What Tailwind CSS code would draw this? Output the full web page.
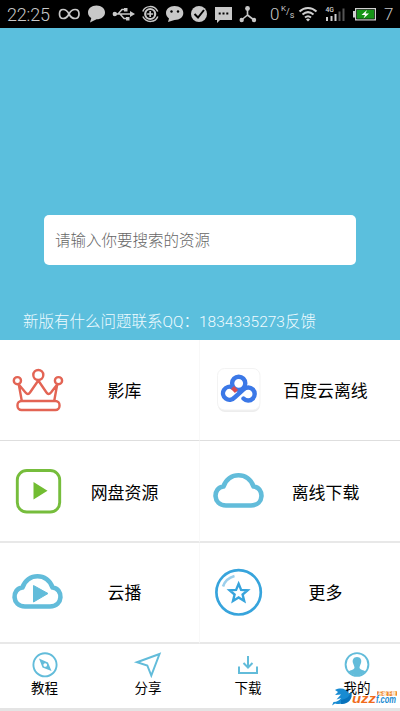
<!DOCTYPE html>
<html lang="zh-CN">
<head>
<meta charset="utf-8">
<title>云搜索</title>
<script src="https://cdn.jsdelivr.net/npm/@tailwindcss/browser@4"></script>
</head>
<body class="w-[400px] h-[711px] overflow-hidden bg-[#e4e4e4] font-[Roboto,'Noto_Sans_CJK_SC',sans-serif] text-black">
<div class="flex flex-col h-[711px] relative">
  <header class="h-7 bg-black flex items-center shrink-0 text-[#c8c8c8] font-light">
    <span class="w-[56px] pl-[7px] text-[18px] leading-7 tracking-[-0.2px] shrink-0 pt-[1px]">22:25</span>
    <svg class="w-[214px] h-7 shrink-0" viewBox="56 0 214 28" fill="none" stroke="#c8c8c8">
      <path stroke-width="1.7" d="M69 14C66 8 59.5 8 59.5 14S66 20 69 14S79 8 79 14S72 20 69 14Z"/>
      <path fill="#c8c8c8" stroke="none" d="M96.500 5.500C101.500 5.500 105 8.700 105 12.500S101.500 19.300 96.500 19.300L90 22.500 91.300 18C89 16.700 88 14.800 88 12.500 88 8.700 91.500 5.500 96.500 5.500Z"/>
      <g stroke-width="1.5"><path d="M114 14H132M118 14L122 9.500H125M120 14L124 18.500H127"/><path fill="#c8c8c8" stroke="none" d="M130 11L135 14L130 17ZM124 8h3.500v3.500H124ZM126 17h3.500v3.500H126Z"/><circle cx="114.800" cy="14" r="2.200" fill="#c8c8c8" stroke="none"/></g>
      <circle cx="150.200" cy="14" r="5" stroke-width="2.200"/><path d="M142.800 11.500C145 5.500 154 4.500 157.800 11.500M157.800 16.500C155.500 22.500 146.500 23.500 142.800 16.500" stroke-width="1.500"/><path stroke-width="1.700" d="M147.200 14H153.200M150.200 11V17"/>
      <path fill="#c8c8c8" stroke="none" d="M174.500 6C180 6 183.300 9 183.300 13S180 20 174.500 20L168 22 169 18.500C167 17 166 15 166 13 166 9 169.500 6 174.500 6Z"/>
      <g fill="#000" stroke="none"><circle cx="171.500" cy="11.500" r="1.200"/><circle cx="178" cy="11.500" r="1.200"/></g>
      <circle cx="199" cy="14" r="8" fill="#c8c8c8" stroke="none"/><path stroke="#000" stroke-width="2" d="M194.500 14L198 17.500L204 10"/>
      <path fill="#c8c8c8" stroke="none" d="M215 7H232V20H220L217 23V20H215Z"/><path stroke="#000" stroke-width="2" stroke-dasharray="2 1.800" d="M218.700 13.500H229"/>
      <path stroke-width="1.600" d="M247.500 9V15L241.500 20M247.500 15L254 20"/><g fill="#c8c8c8" stroke="none"><circle cx="247.500" cy="8.500" r="2.400"/><circle cx="241.700" cy="20" r="2.200"/><circle cx="254" cy="20" r="2.200"/></g>
    </svg>
    <span class="w-[10px] text-[17px] leading-7 shrink-0">0</span>
    <span class="w-[16px] shrink-0 flex text-[9px] leading-none pl-[1px] font-normal"><span class="-mt-[3px] text-[8px]">K</span><span>/</span><span class="mt-[3px]">s</span></span>
    <svg class="w-[88px] h-7 shrink-0" viewBox="296 0 88 28" fill="none" stroke="#d0d0d0">
      <g stroke-width="2"><path d="M299.500 11.500C304.500 6.800 311.500 6.800 316.500 11.500M302.500 14.500C306 11.500 310 11.500 313.500 14.500M305 17.500C307 15.800 309 15.800 311 17.500"/></g><path fill="#d0d0d0" stroke="none" d="M306 19.500Q308 17.500 310 19.500L308 21.500Z"/>
      <text x="325.500" y="11.500" fill="#d0d0d0" stroke="none" class="text-[8px] font-medium" textLength="8.500" lengthAdjust="spacingAndGlyphs">4G</text>
      <path stroke-width="2" d="M327 21V17M331.500 21V16M335.500 21V14"/><path stroke="#555" stroke-width="2" d="M339.500 21V11.500M343.500 21V8.500"/>
      <path fill="#d0d0d0" stroke="none" d="M353 11h2v-3h21v12.500h-21v-3h-2Z"/><path fill="#159416" stroke="#111" stroke-width=".7" d="M356.500 9.500H374.500V19H356.500Z"/><path fill="#fff" stroke="none" d="M367 10L361.500 15H365L363.500 18.500L369 13.500H365.500Z"/>
    </svg>
    <span class="text-[17px] leading-7">7</span>
  </header>

  <section class="h-[312px] bg-[#5bbfdd] shrink-0 flex flex-col">
    <div class="mt-[187px] mx-11 h-[50px] bg-white rounded-[5px] px-[11px] flex items-center text-[15.500px] font-light text-[#666] font-['Noto_Sans_CJK_SC',sans-serif]">请输入你要搜索的资源</div>
    <p class="mt-[45px] pl-[23px] text-[15.500px] leading-6 font-light text-[#f0fbff] whitespace-nowrap">新版有什么问题联系QQ：1834335273反馈</p>
  </section>

  <main class="grid grid-cols-2 grid-rows-[101px_102px_101px] shrink-0 text-[16.900px]">
    <div class="bg-white flex items-start border-r border-r-[#f8f8f8] border-b border-b-[#dedede]">
      <svg class="w-[76px] h-[100px] shrink-0" viewBox="0 340 76 100" fill="none" stroke="#e36454" stroke-width="2.400" stroke-linejoin="round">
        <circle cx="38.300" cy="375" r="5"/><circle cx="17.400" cy="380.700" r="3.600"/><circle cx="58.500" cy="380.700" r="3.600"/>
        <path d="M21.800 401L18.800 384.500L25.500 392.500Q28 395.500 30 392.500L38.300 380.500L46.500 392.500Q48.500 395.500 51 392.500L57.200 384.500L54.200 401"/><rect x="17.500" y="401" width="42" height="9" rx="4"/>
      </svg>
      <span class="w-[97px] text-center leading-[100px] pt-[1px] h-[100px]">影库</span>
    </div>
    <div class="bg-white flex items-start border-b border-b-[#dedede]">
      <svg class="w-[76px] h-[100px] shrink-0" viewBox="200 340 76 100" fill="none">
        <rect x="218" y="370" width="42" height="42" rx="7" fill="#ededed"/><rect x="217.500" y="368.500" width="42.500" height="41.500" rx="7" fill="#fff" stroke="#f3f3f3"/>
        <g stroke="#3b78e7" stroke-width="4.400"><circle cx="238.700" cy="383.300" r="6.600"/><path d="M232.500 387.500A6.500 6.500 0 1 0 234.500 397.500L243.500 389.500A6.500 6.500 0 1 1 243.500 398.500" stroke-linecap="round"/></g>
        <path stroke="#d84b50" stroke-width="4.500" d="M232.500 387.500L236.500 391.500"/>
      </svg>
      <span class="w-[99px] text-center whitespace-nowrap leading-[100px] pt-[1px] h-[100px]">百度云离线</span>
    </div>
    <div class="bg-white flex items-start border-r border-r-[#f8f8f8] border-b-2 border-b-[#e8e8e8]">
      <svg class="w-[76px] h-[100px] shrink-0" viewBox="0 441 76 100">
        <rect x="17.300" y="470.500" width="42.400" height="41.500" rx="9.500" fill="none" stroke="#76bd3c" stroke-width="2.900"/><path fill="#72bd32" d="M33.500 482L47.500 490.800L33.500 499.500Z"/>
      </svg>
      <span class="w-[97px] text-center leading-[100px] pt-[2px] h-[100px]">网盘资源</span>
    </div>
    <div class="bg-white flex items-start border-b-2 border-b-[#e8e8e8]">
      <svg class="w-[76px] h-[100px] shrink-0" viewBox="200 441 76 100" fill="none">
        <path stroke="#62bcda" stroke-width="4.600" stroke-linejoin="round" d="M226 505.500C212.500 505.500 212.500 487.500 223.500 486.500C228 471.500 249 471.500 253.500 486.500C264.500 487.500 264.500 505.500 251 505.500Z"/>
      </svg>
      <span class="w-[99px] text-center leading-[100px] pt-[2px] h-[100px]">离线下载</span>
    </div>
    <div class="bg-white flex items-start border-r border-r-[#f8f8f8] border-b-2 border-b-[#e8e8e8]">
      <svg class="w-[76px] h-[99px] shrink-0" viewBox="0 543 76 99" fill="none">
        <path stroke="#62bcda" stroke-width="4.600" stroke-linejoin="round" d="M25 606.500C11.500 606.500 11.500 588.500 22.500 587.500C27 572.500 48 572.500 52.500 587.500C63.500 588.500 63.500 606.500 50 606.500Z"/><path fill="#62bcda" stroke="#62bcda" stroke-linejoin="round" d="M33.500 585.500L48 593.500L33.500 602Z"/>
      </svg>
      <span class="w-[97px] text-center leading-[99px] pt-[1px] h-[99px]">云播</span>
    </div>
    <div class="bg-white flex items-start border-b-2 border-b-[#e8e8e8]">
      <svg class="w-[76px] h-[99px] shrink-0" viewBox="200 543 76 99" fill="none" stroke="#37a4dc">
        <circle cx="238.600" cy="592.300" r="22.200" stroke-width="2.700"/><path stroke="#9bcfec" stroke-width="2.600" d="M223 586.500C225 580.500 229 577.500 234.500 576"/>
        <path stroke-width="2.400" d="M238.600 583.800L241.100 589.900L247.600 590.300L242.600 594.500L244.200 601L238.600 597.500L233 601L234.600 594.500L229.600 590.300L236.100 589.900Z"/>
      </svg>
      <span class="w-[99px] text-center leading-[99px] pt-[1px] h-[99px]">更多</span>
    </div>
  </main>

  <nav class="h-[64px] bg-white shrink-0 flex items-start text-[13.500px] leading-5">
    <div class="w-[89px] pt-[6px] flex flex-col items-center">
      <svg class="w-[30px] h-[28px]" viewBox="29.500 650 30 28" fill="none"><circle cx="44.500" cy="664.800" r="11.600" stroke="#62bcda" stroke-width="1.900"/><path fill="#62bcda" fill-rule="evenodd" d="M38.500 658.500L47.500 662.500L51 671L42 667.500ZM44.700 663.200A1.800 1.800 0 1 0 44.710 663.200Z"/></svg>
      <span>教程</span>
    </div>
    <div class="w-[118px] pt-[6px] flex flex-col items-center">
      <svg class="w-[30px] h-[28px]" viewBox="133 650 30 28" fill="none"><path stroke="#62bcda" stroke-width="2" d="M159.500 654L137 662.200L147.300 665.500L151.300 675.500Z"/></svg>
      <span>分享</span>
    </div>
    <div class="w-[82px] pt-[6px] flex flex-col items-center">
      <svg class="w-[30px] h-[28px]" viewBox="233 650 30 28" fill="none" stroke="#62bcda" stroke-width="2"><path d="M239 666.500V673H257V666.500M248 656V667.500M243.500 663L248 667.500L252.500 663"/></svg>
      <span>下载</span>
    </div>
    <div class="flex-1 pt-[6px] flex flex-col items-center pl-[25px]">
      <svg class="w-[30px] h-[28px]" viewBox="342.500 650 30 28" fill="none"><circle cx="357.500" cy="664.500" r="11.400" stroke="#62bcda" stroke-width="1.900"/><path fill="#62bcda" d="M357.500 657C361 657 362.500 660 361.500 663C361 665 360 666 360 668C361 670 364 670 366 671.500C361.500 676.500 353.500 676.500 349 671.500C351 670 354 670 355 668C355 666 354 665 353.500 663C352.500 660 354 657 357.500 657Z"/></svg>
      <span>我的</span>
    </div>
  </nav>

  <svg class="absolute left-[328px] top-[685px] w-[72px] h-[24px]" viewBox="328 685 72 24">
    <rect x="377" y="691" width="20" height="5" rx="1" fill="#ee8b35"/>
    <text x="378" y="695.200" font-size="4.500" fill="#fff" textLength="18" lengthAdjust="spacingAndGlyphs" font-family="'Noto Sans CJK SC'" font-weight="700">东坡下载</text>
    <path fill="#188bd2" d="M335 690C341 687 347 689 349 694L351 692C351 700 343 706 335 703.500L332 705.500L333.500 702C337 702 340 700 341 698L336.500 699.500L341 694.500L335 695L338 692Z"/><path fill="#0873bc" d="M341 700C346 699 350 697 351 691.500C354 699 347 705 341 704Z"/>
    <text x="352" y="702.500" font-family="'Liberation Sans'" font-size="13.500" font-weight="700" font-style="italic" textLength="24" lengthAdjust="spacingAndGlyphs" fill="#f06b1b" stroke="#fff" stroke-width="1.500" paint-order="stroke">uzz</text>
    <text x="376" y="702.500" font-family="'Liberation Sans'" font-size="11" font-weight="700" font-style="italic" textLength="20" lengthAdjust="spacingAndGlyphs" fill="#188bd2" stroke="#fff" stroke-width="1" paint-order="stroke">f.com</text>
  </svg>
</div>
</body>
</html>
